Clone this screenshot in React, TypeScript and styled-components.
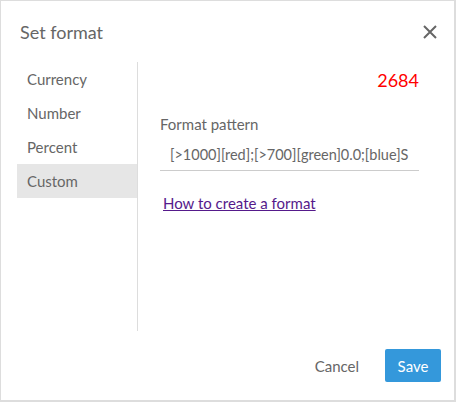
import styled, { createGlobalStyle } from "styled-components";

const Global = createGlobalStyle`
  html, body {
    margin: 0;
    padding: 0;
    background: #ffffff;
  }
  * {
    box-sizing: border-box;
  }
`;

const tabs = ["Currency", "Number", "Percent", "Custom"];

export default function App() {
  return (
    <>
      <Global />
      <Dialog>
        <Header>
          <Title>Set format</Title>
          <CloseButton aria-label="Close">
            <svg width="14" height="14" viewBox="0 0 14 14">
              <path d="M1 1L13 13M13 1L1 13" stroke="#666" strokeWidth="2" />
            </svg>
          </CloseButton>
        </Header>
        <Body>
          <Sidebar>
            {tabs.map((t) => (
              <Tab key={t} $active={t === "Custom"}>
                {t}
              </Tab>
            ))}
          </Sidebar>
          <Content>
            <Preview>2684</Preview>
            <Label>Format pattern</Label>
            <Input defaultValue="[>1000][red];[>700][green]0.0;[blue]S" />
            <HelpLink href="#">How to create a format</HelpLink>
          </Content>
        </Body>
        <Footer>
          <CancelButton>Cancel</CancelButton>
          <SaveButton>Save</SaveButton>
        </Footer>
      </Dialog>
    </>
  );
}

const Dialog = styled.div`
  width: 456px;
  height: 402px;
  border: 1px solid #dddddd;
  border-right-width: 2px;
  border-bottom-width: 2px;
  background: #ffffff;
  display: flex;
  flex-direction: column;
  font-family: "Lato", "Open Sans", sans-serif;
  color: #666666;
`;

const Header = styled.div`
  height: 61px;
  display: flex;
  align-items: center;
  justify-content: space-between;
  padding: 0 16px 0 19px;
`;

const Title = styled.div`
  font-size: 18px;
  color: #666666;
`;

const CloseButton = styled.button`
  border: none;
  background: none;
  padding: 0;
  display: flex;
  width: 16px;
  height: 16px;
  align-items: center;
  justify-content: center;
  cursor: pointer;
`;

const Body = styled.div`
  height: 269px;
  display: flex;
  padding-left: 16px;
`;

const Sidebar = styled.div`
  width: 121px;
  border-right: 1px solid #dddddd;
  display: flex;
  flex-direction: column;
`;

const Tab = styled.div<{ $active?: boolean }>`
  height: 34px;
  display: flex;
  align-items: center;
  padding-left: 10px;
  font-size: 15px;
  color: #666666;
  background: ${(p) => (p.$active ? "#e6e6e6" : "transparent")};
`;

const Content = styled.div`
  flex: 1;
  display: flex;
  flex-direction: column;
  padding: 6px 35px 0 22px;
`;

const Preview = styled.div`
  align-self: flex-end;
  font-size: 18px;
  color: #ff0000;
  height: 24px;
  line-height: 24px;
`;

const Label = styled.div`
  margin-top: 22px;
  font-size: 15px;
  line-height: 20px;
  color: #666666;
`;

const Input = styled.input`
  margin-top: 8px;
  height: 29px;
  border: none;
  border-bottom: 1px solid #cccccc;
  padding: 0 0 4px 10px;
  font-family: inherit;
  font-size: 14.5px;
  color: #666666;
  outline: none;
  width: 100%;
`;

const HelpLink = styled.a`
  margin-top: 23px;
  margin-left: 3px;
  font-size: 15px;
  color: #551a8b;
  text-decoration: underline;
  align-self: flex-start;
`;

const Footer = styled.div`
  flex: 1;
  display: flex;
  align-items: center;
  justify-content: flex-end;
  gap: 12px;
  padding-right: 13px;
`;

const CancelButton = styled.button`
  border: none;
  background: none;
  font-family: inherit;
  font-size: 15px;
  color: #666666;
  height: 33px;
  padding: 0 14px;
  cursor: pointer;
`;

const SaveButton = styled.button`
  border: none;
  border-radius: 2px;
  background: #3498db;
  color: #ffffff;
  font-family: inherit;
  font-size: 15px;
  width: 56px;
  height: 33px;
  cursor: pointer;
`;
